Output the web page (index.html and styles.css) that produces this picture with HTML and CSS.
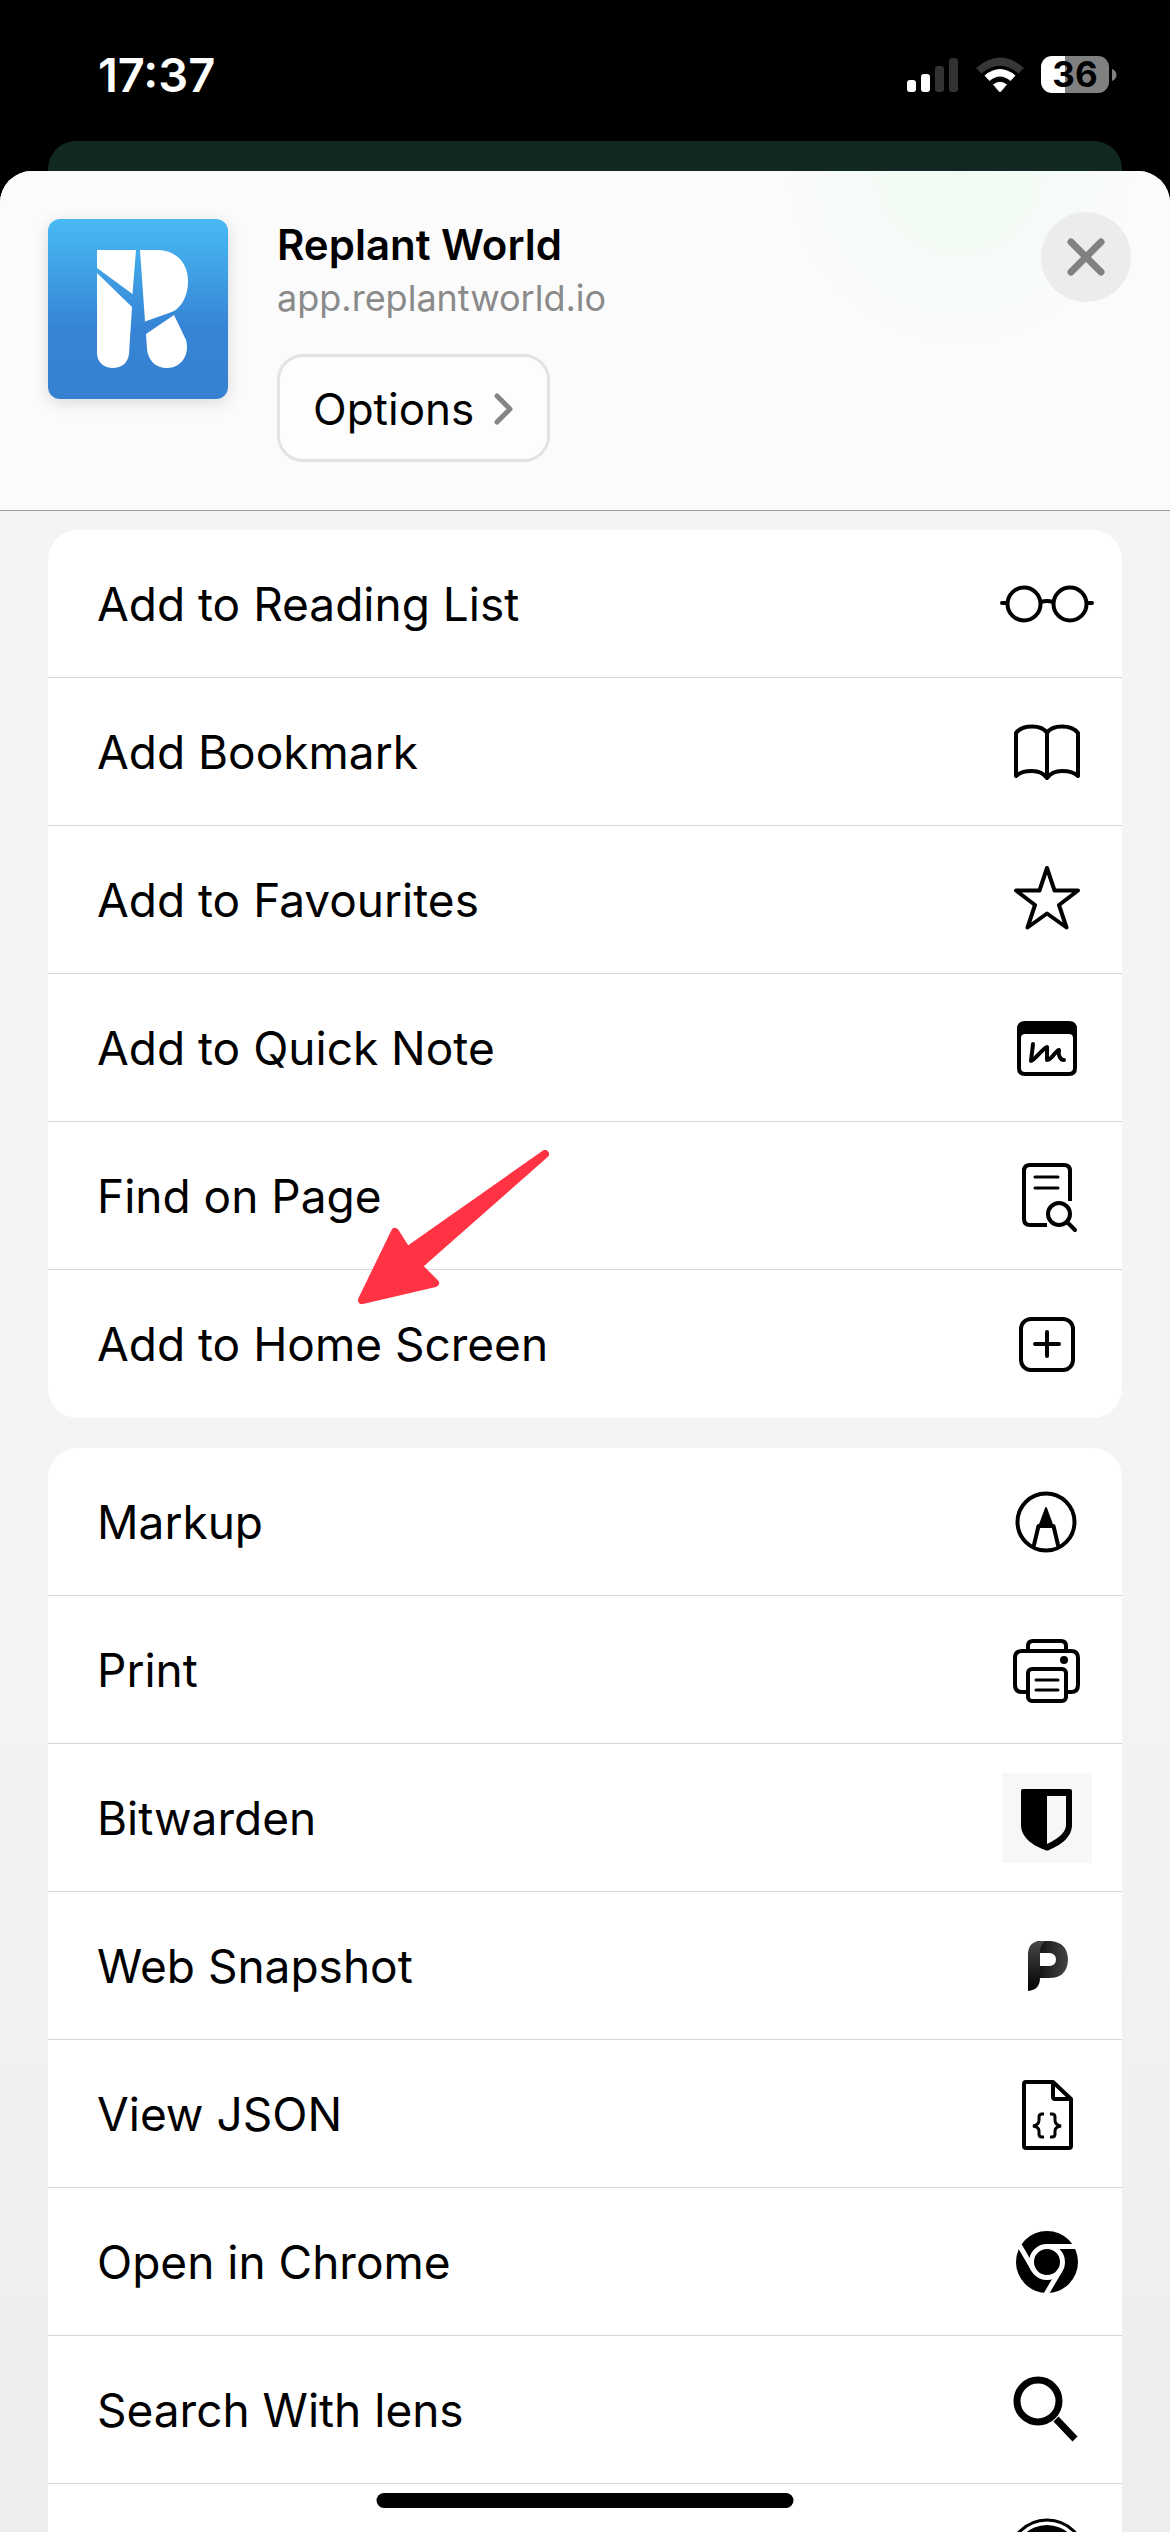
FILE: index.html
```html
<!DOCTYPE html>
<html lang="en-GB">
<head>
<meta charset="utf-8">
<meta name="viewport" content="width=device-width, initial-scale=1">
<title>Share</title>
<link rel="stylesheet" href="styles.css">
</head>
<body>
<div class="screen">
  <div class="status">
    <time class="clock">17:37</time>
    <div class="indicators">
      <svg class="signal" width="52" height="36" viewBox="0 0 52 36" aria-hidden="true">
        <g fill="#fff"><rect x="0" y="23" width="9" height="12" rx="3"/><rect x="14" y="17" width="9" height="18" rx="3"/></g>
        <g fill="#323232"><rect x="28" y="9" width="9" height="26" rx="3"/><rect x="42" y="1" width="9" height="34" rx="3"/></g>
      </svg>
      <svg class="wifi" width="50" height="36" viewBox="0 0 50 36" aria-hidden="true">
        <path d="M1 11Q25-10 49 11L43.500 16.500Q25 1 6.500 16.500Z" fill="#363636"/>
        <path d="M9.500 18.500Q25 5.500 40.500 18.500L35.500 24Q25 15 14.500 24Z" fill="#fff"/>
        <path d="M18 27.500Q25 22 32 27.500L26.500 34Q25 36 23.500 34Z" fill="#fff"/>
      </svg>
      <div class="battery"><span class="level">36</span><svg width="5" height="12" viewBox="0 0 5 12" aria-hidden="true"><path d="M0 0C6 2 6 10 0 12Z" fill="#808080"/></svg></div>
    </div>
  </div>
  <div class="behind"></div>
  <main class="sheet">
    <header class="head">
      <svg class="app-icon" viewBox="0 0 180 180" aria-hidden="true">
        <defs><linearGradient id="sky" x1="0" y1="0" x2="0" y2="1"><stop offset="0" stop-color="#48b9f3"/><stop offset=".15" stop-color="#43aeec"/><stop offset=".6" stop-color="#3784d6"/><stop offset="1" stop-color="#3680d0"/></linearGradient></defs>
        <rect width="180" height="180" fill="url(#sky)"/>
        <g fill="#fff">
          <path d="M49 31H88L84.500 75L49 49Z"/>
          <path d="M92 31H109C129 31 140 45 140 62C140 79 132 91 121 94L97 102.500Z"/>
          <path d="M49 54L84 88L81 135C80 144 73 149 65 149C56 149 49 143 49 134Z"/>
          <path d="M98 115L126 96L138 121C142 136 133 149 119 149C107 149 100 141 99 130Z"/>
        </g>
      </svg>
      <div class="info">
        <h1>Replant World</h1>
        <p>app.replantworld.io</p>
        <button class="options" type="button">Options
          <svg width="20" height="34" viewBox="0 0 20 34" aria-hidden="true"><path d="M3 4L16 17L3 30" fill="none" stroke="#858585" stroke-width="5" stroke-linecap="round" stroke-linejoin="round"/></svg>
        </button>
      </div>
      <button class="close" type="button" aria-label="Close">
        <svg width="38" height="38" viewBox="0 0 38 38" aria-hidden="true"><path d="M4 4L34 34M34 4L4 34" stroke="#818181" stroke-width="7" stroke-linecap="round"/></svg>
      </button>
    </header>
    <div class="body">
      <div class="group">
        <button class="row" type="button">Add to Reading List
          <svg class="icon" viewBox="0 0 96 96" aria-hidden="true"><g class="line"><circle cx="25" cy="48" r="16.500"/><circle cx="71" cy="48" r="16.500"/><path d="M3 47H8M88 47H93M42 46Q48 44 54 46"/></g></svg>
        </button>
        <button class="row" type="button">Add Bookmark
          <svg class="icon" viewBox="0 0 96 96" aria-hidden="true"><path class="line" d="M48 29V74M48 29Q44 22.500 33 22.500Q22 22.500 17 29V72Q22 67 33 67Q43 67 48 74Q53 67 63 67Q74 67 79 72V29Q74 22.500 63 22.500Q52 22.500 48 29"/></svg>
        </button>
        <button class="row" type="button">Add to Favourites
          <svg class="icon" viewBox="0 0 96 96" aria-hidden="true"><path class="line" d="M48 16L55.500 38.500H79L60 53L67.500 75.500L48 61.500L28.500 75.500L36 53L17 38.500H40.500Z"/></svg>
        </button>
        <button class="row" type="button">Add to Quick Note
          <svg class="icon" viewBox="0 0 96 96" aria-hidden="true"><path fill-rule="evenodd" d="M25 21H70Q78 21 78 29V68Q78 76 70 76H26Q18 76 18 68V29Q18 21 26 21ZM26 34Q22 34 22 38V68Q22 72 26 72H70Q74 72 74 68V38Q74 34 70 34Z"/><path class="line" d="M34 44L32 61C37 59 42 50 48 47L48 60C53 60 56 51 60 50C59 55 61 60 65 60"/></svg>
        </button>
        <button class="row" type="button">Find on Page
          <svg class="icon" viewBox="0 0 96 96" aria-hidden="true"><g class="line"><path d="M71 53V23Q71 17 65 17H31Q25 17 25 23V71Q25 77 31 77H48" stroke-linecap="butt"/><path d="M36 29H59M36 40H59" stroke-width="3"/><circle cx="60" cy="66" r="11"/><path d="M68.500 74.500L76 82"/></g></svg>
        </button>
        <button class="row" type="button">Add to Home Screen
          <svg class="icon" viewBox="0 0 96 96" aria-hidden="true"><g class="line"><rect x="22" y="23" width="52" height="51" rx="10"/><path d="M36 48H60M48 36V60"/></g></svg>
        </button>
        <svg class="pointer" width="200" height="160" viewBox="0 0 200 160" aria-hidden="true"><path d="M5 150L38 82L50 101L188 4L61 116L78 133Z" fill="#ff3344" stroke="#ff3344" stroke-width="8" stroke-linejoin="round"/></svg>
      </div>
      <div class="group">
        <button class="row" type="button">Markup
          <svg class="icon" viewBox="0 0 96 96" aria-hidden="true"><circle class="line" cx="47" cy="48" r="28.500"/><path class="line" d="M35 71L39.500 52H54.500L59 71"/><path d="M46 34Q47 32 48 34L55 53H39Z"/></svg>
        </button>
        <button class="row" type="button">Print
          <svg class="icon" viewBox="0 0 96 96" aria-hidden="true"><g class="line"><path d="M29 28V24Q29 19 34 19H62Q67 19 67 24V28M29 70H23Q16 70 16 63V36Q16 29 23 29H72Q79 29 79 36V63Q79 70 72 70H67"/><rect x="29" y="47" width="38" height="32" rx="4"/><path d="M37 58H59M37 68H59" stroke-width="3"/></g><circle cx="65" cy="38" r="4"/></svg>
        </button>
        <button class="row" type="button">Bitwarden
          <svg class="icon" viewBox="0 0 96 96" aria-hidden="true"><rect x="3" y="3" width="90" height="90" fill="#f7f7f7"/><path fill-rule="evenodd" d="M24 19H71Q73 19 73 21V55C73 67 62 75 50 80Q48 81 46 80C33 75 22 67 22 55V21Q22 19 24 19ZM48 26V74Q67 65 67 55V26Z"/></svg>
        </button>
        <button class="row" type="button">Web Snapshot
          <svg class="icon" viewBox="0 0 96 96" aria-hidden="true"><defs><linearGradient id="ink" x1="0" y1="0" x2="0" y2="1"><stop offset="0" stop-color="#484848"/><stop offset="1" stop-color="#000"/></linearGradient><linearGradient id="fold" x1="0" y1="0" x2="1" y2="0"><stop offset="0" stop-color="#111"/><stop offset="1" stop-color="#444"/></linearGradient></defs><path fill="url(#fold)" fill-rule="evenodd" d="M38 23H52Q69 25 69 42Q68 60 50 60H38ZM41 35V48H51Q57 47 57 41.500Q57 36 51 35Z"/><path fill="url(#ink)" d="M29 73V35Q30 23 42 23H46Q41 27 41 35V60Q41 72 29 73Z"/></svg>
        </button>
        <button class="row" type="button">View JSON
          <svg class="icon" viewBox="0 0 96 96" aria-hidden="true"><path class="line" d="M27 16H54L72 33V80Q72 82 70 82H27Q25 82 25 80V18Q25 16 27 16M54 16V31Q54 33 56 33H72"/><path class="brace" d="M45 48H43Q40 48 40 51V54Q40 59 34 60Q40 61 40 65V68Q40 71 43 71H45M51 48H53Q56 48 56 51V54Q56 59 62 60Q56 61 56 65V68Q56 71 53 71H51"/></svg>
        </button>
        <button class="row" type="button">Open in Chrome
          <svg class="icon" viewBox="0 0 96 96" aria-hidden="true"><circle cx="48" cy="48" r="31"/><g fill="none" stroke="#fff" stroke-width="5"><circle cx="48" cy="48" r="15.500"/><path d="M48 32.500H78M34.600 55.800L19 29M61.400 55.800L46 82"/></g></svg>
        </button>
        <button class="row" type="button">Search With lens
          <svg class="icon" viewBox="0 0 96 96" aria-hidden="true"><circle cx="39" cy="39" r="21" fill="none" stroke="#000" stroke-width="7"/><path d="M57 57L76 77" stroke="#000" stroke-width="7"/></svg>
        </button>
        <button class="row" type="button" aria-label="More">
          <svg class="icon" viewBox="0 0 96 96" aria-hidden="true"><circle cx="48" cy="48" r="38" fill="none" stroke="#000" stroke-width="3"/><circle cx="48" cy="48" r="33"/></svg>
        </button>
      </div>
    </div>
  </main>
  <div class="home-bar"></div>
</div>
</body>
</html>
```
FILE: styles.css
```css
* { box-sizing: border-box; }
body { margin: 0; background: #000; color: #000; font-family: Inter, "Liberation Sans", sans-serif; }
button { font: inherit; color: inherit; border: 0; cursor: pointer; }
svg { display: block; flex: none; }
.screen { position: relative; display: flex; flex-direction: column; height: 100vh; overflow: hidden; }

.status { display: flex; align-items: center; justify-content: space-between; height: 141px; padding: 8px 53px 0 98px; flex: none; color: #fff; }
.clock { font-size: 47px; line-height: 56px; font-weight: 600; }
.indicators { display: flex; align-items: center; gap: 16px; }
.battery { display: flex; align-items: center; gap: 3px; }
.level { width: 68px; border-radius: 11px; background: linear-gradient(90deg, #fff 24px, #808080 24px); color: #000; font-size: 35px; line-height: 37px; font-weight: 700; text-align: center; }

.behind { flex: none; height: 30px; margin: 0 48px; border-radius: 28px 28px 0 0; background: #122822; }
.sheet { position: relative; display: flex; flex-direction: column; flex: 1; min-height: 0; border-radius: 32px 32px 0 0; overflow: hidden; background: linear-gradient(#f4f4f4 60%, #eceeee); }
.head { display: flex; flex: none; gap: 49px; padding: 48px 39px 48px 48px; border-bottom: 1px solid #999; background: radial-gradient(circle at 82% 0, #f0fcf3, #fbfbfb 190px); }
.app-icon { width: 180px; height: 180px; border-radius: 12px; box-shadow: 0 4px 16px #0002; }
.info { flex: 1; }
h1 { margin: 0; font-size: 42px; line-height: 52px; font-weight: 600; }
p { margin: 0 0 31px; font-size: 36px; line-height: 54px; color: #8a8a8a; }
.options { display: flex; align-items: center; gap: 20px; height: 108px; margin-top: -2px; padding: 2px 33px 0; border: 3px solid #e3e3e3; border-radius: 26px; background: #fdfdfd; font-size: 44px; }
.close { display: grid; place-items: center; flex: none; width: 90px; height: 90px; margin-top: -7px; border-radius: 50%; background: #ececec; }

.body { display: flex; flex-direction: column; gap: 30px; padding: 19px 48px; }
.group { position: relative; flex: none; border-radius: 30px; background: #fff; }
.row { display: flex; align-items: center; justify-content: space-between; width: 100%; height: 148px; padding: 0 27px 0 49px; border-bottom: 1px solid #d6d6d6; background: none; font-size: 46px; text-align: left; }
.row:nth-of-type(6):nth-last-of-type(1) { border-bottom: 0; }
.row[aria-label] { justify-content: flex-end; }
.icon { width: 96px; height: 96px; }
.line { fill: none; stroke: #000; stroke-width: 4px; stroke-linecap: round; stroke-linejoin: round; }
.brace { fill: none; stroke: #000; stroke-width: 3px; }
.pointer { position: absolute; left: 309px; top: 620px; pointer-events: none; }
.home-bar { position: absolute; left: 50%; bottom: 24px; width: 417px; height: 15px; border-radius: 8px; background: #000; transform: translateX(-50%); }
```
